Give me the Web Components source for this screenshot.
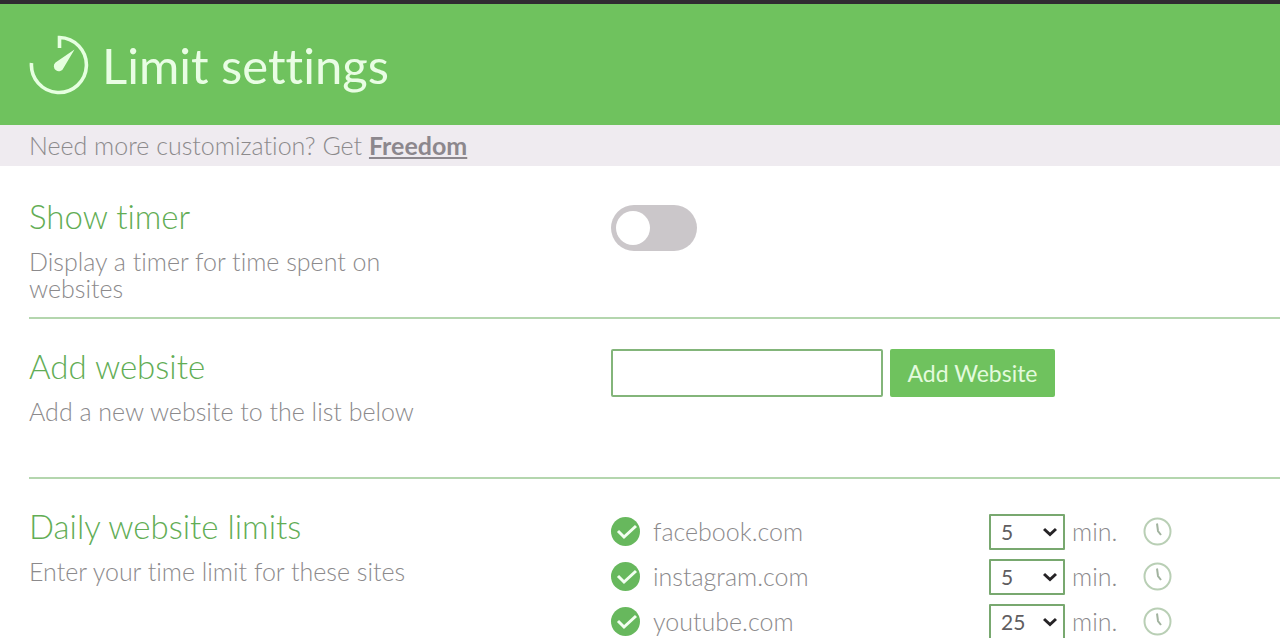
<!DOCTYPE html>
<html lang="en">
<head>
<meta charset="utf-8">
<title>Limit settings</title>
<style>
  html { overflow-x: hidden; }
  body {
    margin: 0;
    background: #fff;
    color: #8c8a8c;
    font: 300 25px/27px Lato, "Open Sans", sans-serif;
    font-variant-ligatures: none;
    --green: #6fc25e;
    --line: #b4d6ae;
    --gutter: 29px;
  }
</style>
</head>
<body>
<limit-settings></limit-settings>
<script>
const define = (name, html, setup) => {
  const template = document.createElement('template');
  template.innerHTML = html;
  customElements.define(name, class extends HTMLElement {
    constructor() {
      super();
      this.attachShadow({ mode: 'open' }).append(template.content.cloneNode(true));
    }
    connectedCallback() { if (setup) setup(this, this.shadowRoot); }
  });
};

define('page-header', `
  <style>
    :host { display: block; border-top: 4px solid #302b31; background: var(--green); color: #fff; }
    header { display: flex; align-items: center; gap: 13px; height: 121px; padding: 0 var(--gutter); }
    svg { width: 60px; height: 60px; }
    h1 { margin: 0; font-size: 49px; line-height: 60px; font-weight: 400; color: #e9fde4; }
  </style>
  <header>
    <svg viewBox="0 0 60 60" fill="none" stroke="#e6ffe0" stroke-width="3.6" aria-hidden="true">
      <path d="M30.500 13V2.500A27.500 27.500 0 1 1 2.500 28"/>
      <path d="M45.500 14.500 34.500 33A5 5 0 1 1 26.500 27.500Z" fill="#e6ffe0" stroke="none"/>
    </svg>
    <h1><slot></slot></h1>
  </header>`);

define('promo-bar', `
  <style>
    :host { display: block; padding: 7px var(--gutter); background: #efebf0; }
    p { margin: 0; }
    a { color: #8c878d; font-weight: 700; text-decoration-thickness: 2px; text-underline-offset: 2px; }
  </style>
  <p>Need more customization? Get <a href="#freedom">Freedom</a></p>`);

define('setting-section', `
  <style>
    :host { display: block; padding-left: var(--gutter); }
    section { display: grid; grid-template-columns: 582fr 669fr; box-sizing: border-box; padding-top: 29px;
      min-height: 160px; border-bottom: 2px solid var(--line); }
    :host([compact]) section { min-height: 153px; padding-top: 32px; }
    :host([last]) section { border-bottom: 0; }
    h2 { margin: 0 0 14px; font-size: 33px; line-height: 36px; font-weight: 300; color: #62ad55; }
    p { margin: 0; max-width: 400px; }
    .control { padding-top: 1px; }
  </style>
  <section>
    <div><h2><slot name="title"></slot></h2><p><slot name="text"></slot></p></div>
    <div class="control"><slot></slot></div>
  </section>`);

define('toggle-switch', `
  <style>
    :host { display: block; padding-top: 6px; }
    input { appearance: none; display: flex; box-sizing: border-box; width: 86px; height: 46px; margin: 0; padding: 6px 5px;
      border-radius: 23px; background: #cbc7ca; }
    input::before { content: ""; width: 34px; height: 34px; border-radius: 50%; background: #fff; }
    input:checked { justify-content: flex-end; background: var(--green); }
  </style>
  <input type="checkbox" role="switch" aria-label="Show timer">`);

define('website-form', `
  <style>
    :host { display: block; }
    form { display: flex; gap: 7px; }
    input { box-sizing: border-box; width: 272px; height: 48px; padding: 0 12px; border: 2px solid #83b57a;
      border-radius: 2px; background: #fff; font: inherit; color: inherit; }
    button { height: 48px; width: 165px; padding: 0; border: 0; border-radius: 2px; background: var(--green); color: #e3fadd;
      font: 400 23px/27px Lato, sans-serif; font-variant-ligatures: none; white-space: nowrap; }
  </style>
  <form onsubmit="return false">
    <input type="text" aria-label="Website">
    <button type="submit">Add Website</button>
  </form>`);

define('limit-row', `
  <style>
    :host { display: grid; grid-template-columns: 378px 76px 78px 29px; align-items: center; height: 45px; }
    .site { display: flex; align-items: center; gap: 13px; }
    .tick { display: grid; width: 29px; height: 29px; }
    .tick > * { grid-area: 1 / 1; width: 29px; height: 29px; margin: 0; }
    .tick input { appearance: none; border-radius: 50%; background: #67b85d; }
    .tick svg, .pick svg { pointer-events: none; z-index: 1; }
    .pick { display: grid; align-items: center; }
    .pick > * { grid-area: 1 / 1; }
    .pick svg { width: 14px; height: 10px; justify-self: end; margin-right: 8px; }
    select { appearance: none; box-sizing: border-box; width: 76px; height: 36px; padding: 0 10px; border: 2px solid #78a86f;
      border-radius: 1px; background: #fff; color: #605d60; font: 400 21px/27px Lato, sans-serif; }
    .unit { padding-left: 7px; }
    button { display: flex; width: 29px; height: 29px; padding: 0; border: 0; background: none; }
  </style>
  <label class="site">
    <span class="tick">
      <input type="checkbox" checked>
      <svg viewBox="0 0 29 29" fill="none" stroke="#f2fff0" stroke-width="3"><path d="m7 14 6 6L25 9"/></svg>
    </span>
    <slot></slot>
  </label>
  <span class="pick">
    <select aria-label="Daily limit in minutes"><option>5</option><option>10</option><option>15</option><option>20</option><option>25</option><option>30</option></select>
    <svg viewBox="0 0 14 10" fill="none" stroke="#262326" stroke-width="3"><path d="m1 2 6 5.500L13 2"/></svg>
  </span>
  <span class="unit">min.</span>
  <button type="button" aria-label="Schedule">
    <svg viewBox="0 0 29 29" width="29" height="29" fill="none" stroke="#b9cfb5" stroke-width="2">
      <circle cx="14.500" cy="14.500" r="13"/><path d="M14 6.500 15 14l3 4" stroke="#a2b39f"/>
    </svg>
  </button>`, (host, root) => { root.querySelector('select').value = host.getAttribute('minutes'); });

define('limit-settings', `
  <style>
    :host { display: block; }
  </style>
  <page-header>Limit settings</page-header>
  <promo-bar></promo-bar>
  <main>
    <setting-section compact>
      <span slot="title">Show timer</span>
      <span slot="text">Display a timer for time spent on websites</span>
      <toggle-switch></toggle-switch>
    </setting-section>
    <setting-section>
      <span slot="title">Add website</span>
      <span slot="text">Add a new website to the list below</span>
      <website-form></website-form>
    </setting-section>
    <setting-section last>
      <span slot="title">Daily website limits</span>
      <span slot="text">Enter your time limit for these sites</span>
      <limit-row minutes="5">facebook.com</limit-row>
      <limit-row minutes="5">instagram.com</limit-row>
      <limit-row minutes="25">youtube.com</limit-row>
    </setting-section>
  </main>`);
</script>
</body>
</html>
